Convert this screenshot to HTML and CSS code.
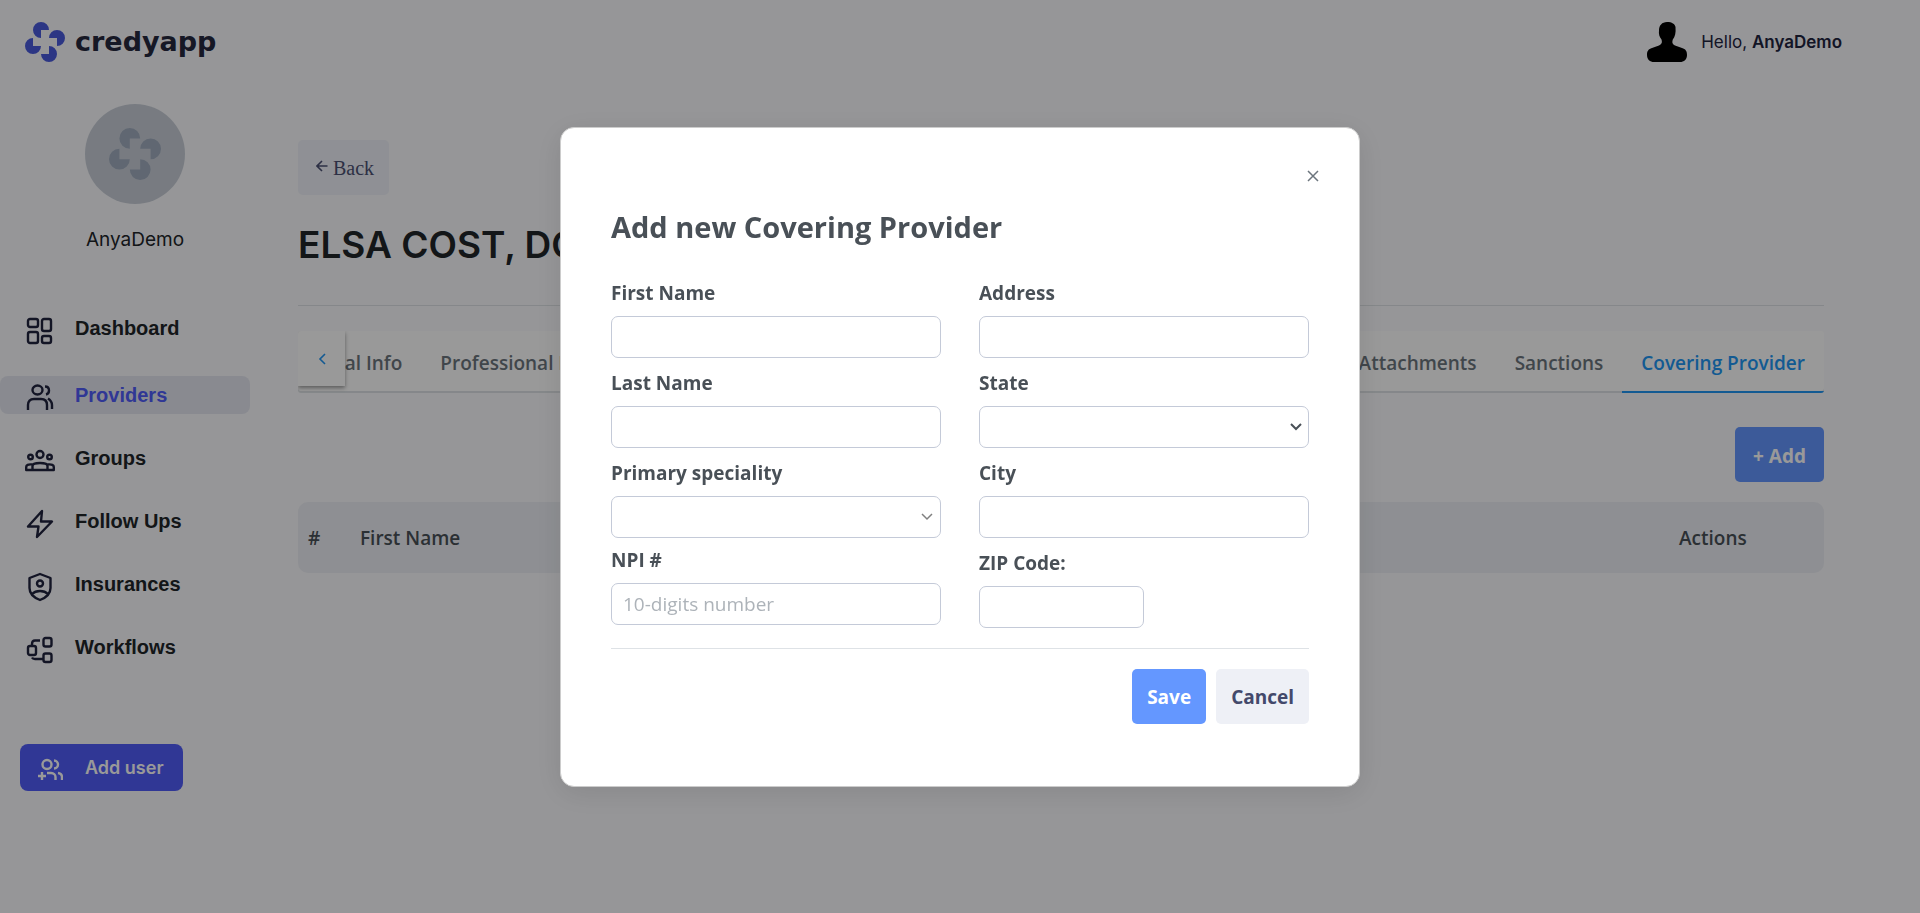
FILE: index.html
```html
<!DOCTYPE html>
<html lang="en">
<head>
    <meta charset="UTF-8">
    <meta name="viewport" content="width=device-width, initial-scale=1.0">
    <title>Credyapp - Covering Provider</title>
    <link rel="stylesheet" href="styles.css">
</head>
<body>
    <!-- Shared logo shape -->
    <svg class="sprite" aria-hidden="true">
        <symbol id="mark" viewBox="-5 -5 10 10">
            <path d="M-1 -3H1A2 2 0 1 0 -1 -1Z"/>
            <path d="M-1 -3H1A2 2 0 1 0 -1 -1Z" transform="rotate(90)"/>
            <path d="M-1 -3H1A2 2 0 1 0 -1 -1Z" transform="rotate(180)"/>
            <path d="M-1 -3H1A2 2 0 1 0 -1 -1Z" transform="rotate(270)"/>
        </symbol>
    </svg>

    <header class="topbar">
        <a href="#" class="logo">
            <svg class="logo-mark"><use href="#mark"/></svg>
            <span>credyapp</span>
        </a>
        <div class="user">
            <svg class="user-icon" viewBox="0 0 40 40">
                <path d="M20 0C15 0 12 3.500 12 8.500C11.500 12 12.500 15 14.500 17.500C15.500 21 14.500 22 12 23.500L5 26C1.500 27 0 29 0 33C0 37.500 3 40 7 40H33C37 40 40 37.500 40 33C40 29 38.500 27 35 26L28 23.500C25.500 22 24.800 21 25.800 17.500C28 15 29 11 28.500 5C28 2 25 0 20 0Z"/>
            </svg>
            <span>Hello, <b>AnyaDemo</b></span>
        </div>
    </header>

    <div class="layout">
        <aside class="sidebar">
            <div class="avatar"><svg><use href="#mark"/></svg></div>
            <p class="avatar-name">AnyaDemo</p>

            <ul class="menu">
                <li><a href="#">
                    <svg viewBox="0 0 30 30"><rect x="3" y="3" width="10" height="8" rx="2"/><rect x="17" y="3" width="9" height="12" rx="2"/><rect x="3" y="16" width="10" height="11" rx="2"/><rect x="17" y="20" width="9" height="7" rx="2"/></svg>
                    Dashboard
                </a></li>
                <li class="active"><a href="#">
                    <svg viewBox="0 0 30 30"><ellipse cx="12.500" cy="7" rx="5" ry="4.500"/><path d="M3 27v-5c0-4 2-6 6-6h7c4 0 6 2 6 6v5M20 3.500c3 0 4 2 4 4s-1 3.500-3 4M23 15.500c3 2 4 4 4 6.500v4"/></svg>
                    Providers
                </a></li>
                <li><a href="#">
                    <svg viewBox="0 0 30 30"><circle cx="15" cy="8.500" r="3.500"/><circle cx="5.500" cy="11" r="2.300"/><circle cx="24.500" cy="11" r="2.300"/><path d="M7.500 24v-4c0-2.500 3-3 7.500-3s7.500.500 7.500 3v4M7.500 18.500C3 18 1.200 19 1.200 21v3h27.600v-3c0-2-1.800-3-6.300-2.500"/></svg>
                    Groups
                </a></li>
                <li><a href="#">
                    <svg viewBox="0 0 30 30"><path d="M17 2L3 17.500h10.500L12 28L27 12.500H16Z"/></svg>
                    Follow Ups
                </a></li>
                <li><a href="#">
                    <svg viewBox="0 0 30 30"><path d="M15 2L25.500 6v10c0 6-4 9.500-10.500 12C8.500 25.500 4.500 22 4.500 16V6Z"/><circle cx="15" cy="11.500" r="3"/><path d="M7 22c4-4 12-4 16 0"/></svg>
                    Insurances
                </a></li>
                <li><a href="#">
                    <svg viewBox="0 0 30 30"><rect x="3" y="11" width="8" height="9" rx="2"/><rect x="18.500" y="3" width="8" height="8.500" rx="2"/><rect x="18.500" y="18.500" width="8" height="8.500" rx="2"/><path d="M7 11V9c0-2 1-3.500 3-3.500h5M7 22.500c.500 1 1.500 1.500 3 1.500h8"/></svg>
                    Workflows
                </a></li>
            </ul>

            <button type="button" class="add-user">
                <svg viewBox="0 0 26 26"><circle cx="10" cy="7.500" r="4.500"/><path d="M17 3.500c2.500 0 4 2 4 4s-1.500 4-4 4M1 19h8M5 15v8M10 16h4c3 0 4.500 2 4.500 4v3M21 16c3 .500 4 2 4 4v3"/></svg>
                Add user
            </button>
        </aside>

        <main class="content">
            <button type="button" class="back">
                <svg viewBox="0 0 12 12"><path d="M11.500 6H1M6 1L1 6l5 5"/></svg>
                Back
            </button>
            <h1>ELSA COST, DO</h1>

            <div class="tabs">
                <button type="button" class="tabs-prev" aria-label="Previous tabs">
                    <svg viewBox="0 0 8 12"><path d="M7 1L2 6l5 5"/></svg>
                </button>
                <div class="tabs-group tabs-scrolled">
                    <a href="#">Personal Info</a>
                    <a href="#">Professional Info</a>
                </div>
                <div class="tabs-group">
                    <a href="#">Attachments</a>
                    <a href="#">Sanctions</a>
                    <a href="#" class="selected">Covering Provider</a>
                </div>
            </div>

            <div class="toolbar">
                <button type="button" class="btn btn-primary">+ Add</button>
            </div>

            <table class="providers">
                <thead>
                    <tr>
                        <th class="col-num">#</th>
                        <th>First Name</th>
                        <th class="col-actions">Actions</th>
                    </tr>
                </thead>
            </table>
        </main>
    </div>

    <!-- Add provider modal -->
    <div class="overlay">
        <form class="modal" role="dialog" aria-labelledby="modal-title">
            <button type="button" class="close" aria-label="Close">
                <svg viewBox="0 0 12 12"><path d="M1 1l10 10M11 1L1 11"/></svg>
            </button>
            <h2 id="modal-title">Add new Covering Provider</h2>

            <div class="form-columns">
                <div class="form-column">
                    <div class="field">
                        <label for="first-name">First Name</label>
                        <input type="text" id="first-name">
                    </div>
                    <div class="field">
                        <label for="last-name">Last Name</label>
                        <input type="text" id="last-name">
                    </div>
                    <div class="field field-tight">
                        <label for="speciality">Primary speciality</label>
                        <select id="speciality" class="light"><option></option></select>
                    </div>
                    <div class="field">
                        <label for="npi">NPI #</label>
                        <input type="text" id="npi" placeholder="10-digits number">
                    </div>
                </div>
                <div class="form-column">
                    <div class="field">
                        <label for="address">Address</label>
                        <input type="text" id="address">
                    </div>
                    <div class="field">
                        <label for="state">State</label>
                        <select id="state"><option></option></select>
                    </div>
                    <div class="field">
                        <label for="city">City</label>
                        <input type="text" id="city">
                    </div>
                    <div class="field">
                        <label for="zip">ZIP Code:</label>
                        <input type="text" id="zip" class="half">
                    </div>
                </div>
            </div>

            <div class="modal-footer">
                <button type="submit" class="btn btn-primary">Save</button>
                <button type="button" class="btn btn-secondary">Cancel</button>
            </div>
        </form>
    </div>
</body>
</html>
```
FILE: styles.css
```css
* {
    box-sizing: border-box;
}

body {
    margin: 0;
    min-height: 100vh;
    background: #fafafd;
    color: #212529;
    font-family: "Open Sans", "Noto Sans", sans-serif;
    font-size: 19px;
}

a {
    color: inherit;
    text-decoration: none;
}

button {
    font: inherit;
    border: none;
    cursor: pointer;
}

svg {
    display: block;
    flex-shrink: 0;
}

.sprite {
    display: none;
}

/* Top bar */
.topbar {
    display: flex;
    align-items: center;
    justify-content: space-between;
    height: 84px;
    padding: 0 78px 0 25px;
}

.logo {
    display: flex;
    align-items: center;
    gap: 10px;
    color: #26283f;
    font-family: "DejaVu Sans", sans-serif;
    font-size: 27px;
    font-weight: bold;
    line-height: 30px;
}

.logo-mark {
    width: 40px;
    height: 40px;
    fill: #4a5bdc;
}

.user {
    display: flex;
    align-items: center;
    gap: 14px;
    color: #21233f;
    font-family: Inter, sans-serif;
    font-size: 17px;
    line-height: 24px;
}

.user b {
    font-weight: 600;
}

.user-icon {
    width: 40px;
    height: 40px;
    fill: #000;
}

/* Sidebar */
.layout {
    display: flex;
}

.sidebar {
    width: 270px;
    padding-top: 20px;
    flex-shrink: 0;
}

.avatar {
    display: flex;
    align-items: center;
    justify-content: center;
    width: 100px;
    height: 100px;
    margin: 0 auto;
    border-radius: 50%;
    background: #c8ced8;
}

.avatar svg {
    width: 52px;
    height: 52px;
    fill: #a0acbe;
}

.avatar-name {
    margin: 21px 0 54px;
    text-align: center;
    font-family: Inter, sans-serif;
    font-size: 19px;
    line-height: 30px;
}

.menu {
    display: flex;
    flex-direction: column;
    gap: 25px;
    width: 250px;
    margin: 0 0 78px;
    padding: 0;
    list-style: none;
    font-family: "Liberation Sans", Arial, sans-serif;
    font-size: 20px;
    font-weight: bold;
}

.menu a {
    display: flex;
    align-items: center;
    gap: 20px;
    height: 38px;
    padding-left: 25px;
    border-radius: 8px;
}

.menu svg {
    width: 30px;
    height: 30px;
    margin-top: 6px;
    fill: none;
    stroke: #21233f;
    stroke-width: 2.4;
    stroke-linejoin: round;
}

.menu .active {
    margin-top: 4px;
}

.menu .active a {
    background: #e4e7f1;
    color: #505cf8;
}

.add-user {
    display: flex;
    align-items: center;
    gap: 22px;
    height: 47px;
    margin-left: 20px;
    padding: 0 19px 0 17px;
    border-radius: 8px;
    background: #505cf8;
    color: #fff;
    font-family: Inter, sans-serif;
    font-size: 18px;
    font-weight: 600;
}

.add-user svg {
    width: 26px;
    height: 26px;
    margin-top: 4px;
    fill: none;
    stroke: #fff;
    stroke-width: 2.4;
}

/* Page content */
.content {
    flex: 1;
    min-width: 0;
    padding: 56px 96px 0 28px;
}

.back {
    display: flex;
    align-items: center;
    gap: 5px;
    height: 55px;
    padding: 2px 15px 0 18px;
    border-radius: 5px;
    background: #eef0f8;
    color: #4c5073;
    font-family: "Liberation Serif", serif;
    font-size: 20px;
}

.back svg {
    width: 12px;
    height: 12px;
    margin-bottom: 5px;
    fill: none;
    stroke: #4c5073;
    stroke-width: 1.6;
}

h1 {
    margin: 0 0 25px;
    padding: 26px 0 36px;
    border-bottom: 1px solid #dee2e6;
    font-family: Inter, sans-serif;
    font-size: 37px;
    font-weight: 600;
    line-height: 48px;
}

.tabs {
    display: flex;
    justify-content: space-between;
    position: relative;
    height: 62px;
    overflow: hidden;
    border-radius: 3px;
    background: #fff;
    box-shadow: inset 0 -2px #dee2e6;
}

.tabs-group {
    display: flex;
}

/* first tab is partly scrolled away behind the arrow */
.tabs-scrolled {
    margin-left: -36px;
}

.tabs-group a {
    padding: 2px 19px 0;
    color: #6c757d;
    font-weight: 600;
    line-height: 60px;
    white-space: nowrap;
}

.tabs-group .selected {
    border-bottom: 2px solid #2196f3;
    color: #2196f3;
}

.tabs-prev {
    display: flex;
    align-items: center;
    justify-content: center;
    position: absolute;
    left: 0;
    top: 0;
    width: 47px;
    height: 55px;
    background: #fff;
    box-shadow: 0 2px 4px rgba(0, 0, 0, 0.4);
}

.tabs-prev svg {
    width: 8px;
    height: 12px;
    fill: none;
    stroke: #2196f3;
    stroke-width: 1.6;
}

.toolbar {
    display: flex;
    justify-content: flex-end;
    padding: 34px 0 20px;
}

.btn {
    height: 55px;
    padding: 2px 15px 0;
    border-radius: 5px;
    font-weight: bold;
}

.toolbar .btn {
    padding: 2px 18px 0;
}

.btn-primary {
    background: #6497ff;
    color: #fff;
}

.btn-secondary {
    background: #eef0f6;
    color: #43496b;
}

.providers {
    width: 100%;
    border-spacing: 0;
}

.providers th {
    height: 71px;
    padding: 0 10px;
    background: #edeff5;
    color: #495057;
    font-weight: 600;
    text-align: left;
}

.providers .col-num {
    width: 52px;
    border-radius: 10px 0 0 10px;
}

.providers .col-actions {
    width: 155px;
    border-radius: 0 10px 10px 0;
}

/* Modal */
.overlay {
    display: flex;
    align-items: center;
    justify-content: center;
    position: fixed;
    inset: 0;
    background: rgba(0, 0, 0, 0.4);
}

.modal {
    display: flex;
    flex-direction: column;
    width: 800px;
    max-width: 100%;
    padding: 33px 50px 62px;
    border: 1px solid #ccc;
    border-radius: 14px;
    background: #fff;
    box-shadow: 0 6px 30px rgba(0, 0, 0, 0.1);
    color: #495057;
}

.close {
    display: flex;
    align-items: center;
    justify-content: center;
    align-self: flex-end;
    width: 30px;
    height: 30px;
    margin-right: -19px;
    padding: 0;
    background: none;
}

.close svg {
    width: 12px;
    height: 12px;
    fill: none;
    stroke: #6c757d;
    stroke-width: 1.5;
}

h2 {
    margin: 16px 0 31px;
    font-size: 29px;
    line-height: 40px;
}

.form-columns {
    display: flex;
    gap: 38px;
}

.form-column {
    display: flex;
    flex: 1;
    flex-direction: column;
    gap: 10px;
}

.field {
    display: flex;
    flex-direction: column;
    gap: 8px;
}

.field-tight {
    margin-bottom: -3px;
}

label {
    font-weight: bold;
    line-height: 30px;
}

input,
select {
    width: 100%;
    height: 42px;
    padding: 0 11px;
    border: 1px solid #c4cad8;
    border-radius: 7px;
    background: #fff;
    color: #495057;
    font: inherit;
}

input::placeholder {
    color: #adb3b9;
}

select {
    appearance: none;
    background: #fff url("data:image/svg+xml,%3Csvg xmlns='http://www.w3.org/2000/svg' width='12' height='8'%3E%3Cpath d='M1 1l5 5 5-5' fill='none' stroke='%23495057' stroke-width='2'/%3E%3C/svg%3E") no-repeat right 6px center;
}

select.light {
    background-image: url("data:image/svg+xml,%3Csvg xmlns='http://www.w3.org/2000/svg' width='12' height='8'%3E%3Cpath d='M1 1l5 5 5-5' fill='none' stroke='%23808080' stroke-width='1.500'/%3E%3C/svg%3E");
    background-position: right 7px center;
}

.half {
    width: 50%;
}

.modal-footer {
    display: flex;
    justify-content: flex-end;
    gap: 10px;
    margin-top: 20px;
    padding-top: 20px;
    border-top: 1px solid #dee2e6;
}
```
